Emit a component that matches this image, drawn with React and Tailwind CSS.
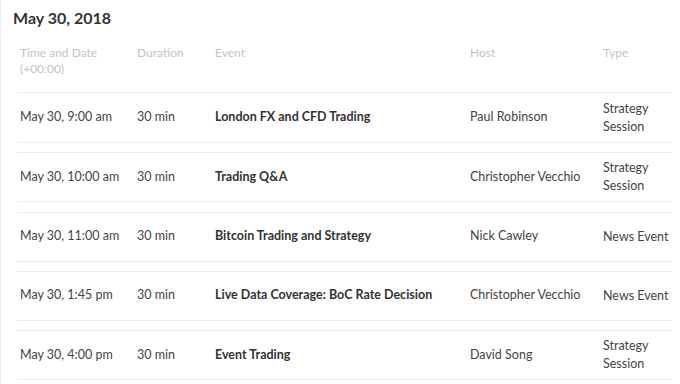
const rows = [
    { time: "May 30, 9:00 am", duration: "30 min", event: "London FX and CFD Trading", host: "Paul Robinson", type: "Strategy Session" },
    { time: "May 30, 10:00 am", duration: "30 min", event: "Trading Q&A", host: "Christopher Vecchio", type: "Strategy Session" },
    { time: "May 30, 11:00 am", duration: "30 min", event: "Bitcoin Trading and Strategy", host: "Nick Cawley", type: "News Event" },
    { time: "May 30, 1:45 pm", duration: "30 min", event: "Live Data Coverage: BoC Rate Decision", host: "Christopher Vecchio", type: "News Event" },
    { time: "May 30, 4:00 pm", duration: "30 min", event: "Event Trading", host: "David Song", type: "Strategy Session" },
];

export default function App() {
    return (
        <div className="w-[680px] h-[384px] bg-white overflow-hidden border-l border-[#f0f0f0] px-3 font-['Lato','Liberation_Sans',sans-serif]">
            <h1 className="pt-[7px] text-[16px] leading-[22px] font-bold text-[#333]">May 30, 2018</h1>

            <div className="ml-1 w-[655px] mt-[16px]">
                <div className="flex border-b border-[#ebebeb] pb-[15px] text-[12px] leading-[16px] text-[#c4c4c4]">
                    <div className="w-[120px] pl-[3px]">Time and Date<br />(+00:00)</div>
                    <div className="w-[78px]">Duration</div>
                    <div className="w-[255px]">Event</div>
                    <div className="w-[133px]">Host</div>
                    <div className="flex-1">Type</div>
                </div>

                {rows.map((r, i) => (
                    <div
                        key={i}
                        className={`flex items-center h-[50px] border-b border-[#ebebeb] text-[12.5px] text-[#444] ${i > 0 ? "border-t mt-[9.25px]" : ""}`}
                    >
                        <div className="w-[120px] pl-[3px]">{r.time}</div>
                        <div className="w-[78px]">{r.duration}</div>
                        <div className="w-[255px] font-bold text-[#333]">{r.event}</div>
                        <div className="w-[133px]">{r.host}</div>
                        <div className="flex-1 leading-[18px]">
                            {r.type === "Strategy Session" ? <>Strategy<br />Session</> : r.type}
                        </div>
                    </div>
                ))}
            </div>
        </div>
    );
}
